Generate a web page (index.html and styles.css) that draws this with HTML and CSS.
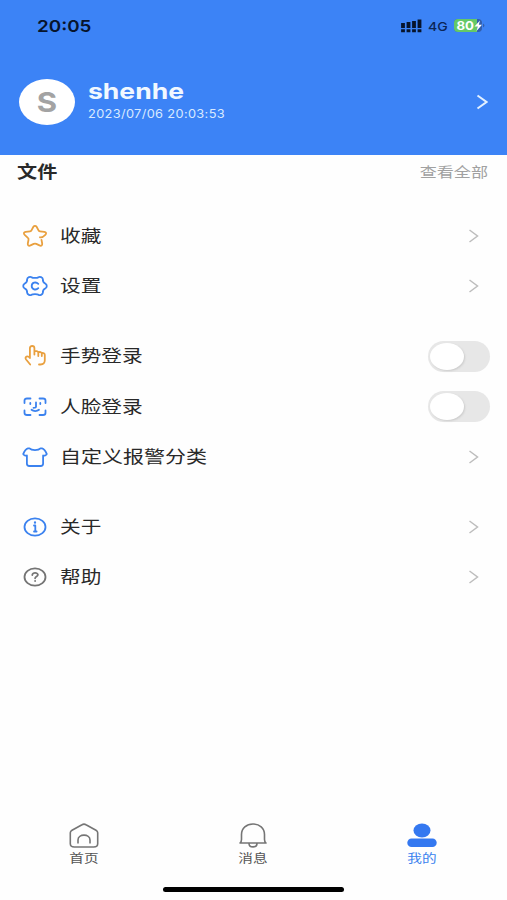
FILE: index.html
```html
<!DOCTYPE html>
<html lang="zh-CN">
<head>
<meta charset="utf-8">
<title>我的</title>
<link rel="stylesheet" href="styles.css">
</head>
<body>
<div class="screen">
  <header class="header">
    <div class="status">
      <span class="wide time">20:05</span>
      <div class="status-right">
        <svg class="signal" width="21" height="14" viewBox="0 0 21 14"><path d="M2 4v5M7.500 3v6M13 2v7M18.500.5v8.500M2 10.200v3M7.500 10.200v3M13 10.200v3M18.500 10.200v3" stroke="#07142c" stroke-width="3.800"/></svg>
        <span class="wide network">4G</span>
        <svg class="battery" width="32" height="14" viewBox="0 0 32 14"><rect width="28" height="13" rx="4" fill="#315fae"/><path d="M4 0h19v13H4a4 4 0 0 1-4-4V4a4 4 0 0 1 4-4Z" fill="#65c966"/><path d="M29 4.500q3 2 0 4Z" fill="#315fae"/><text x="2.500" y="10.800" textLength="17.500" lengthAdjust="spacingAndGlyphs" class="battery-text">80</text><path d="M26 1.500 20.500 7.500h3.200L22.500 12l5.500-6.300h-3.200Z" fill="#fff"/></svg>
      </div>
    </div>
    <div class="profile">
      <div class="avatar"><span>S</span></div>
      <div class="identity">
        <div class="wide name">shenhe</div>
        <div class="wide date">2023/07/06 20:03:53</div>
      </div>
      <svg class="profile-arrow" width="12" height="16" viewBox="0 0 12 16"><path d="m1.500 1.500 9 6.500-9 6.500" fill="none" stroke="#e2f0ff" stroke-width="2"/></svg>
    </div>
  </header>
  <main>
    <div class="section-title"><h1 class="wide">文件</h1><span class="wide all">查看全部</span></div>
    <section class="group">
      <div class="row">
        <svg class="icon orange" viewBox="0 0 26 24"><path d="M18 13.300c1.800.7 3.300-.4 5.300-2.400 1.500-1.500.8-2.700-1-3l-4.300-.6c-.8-.1-1.300-.5-1.600-1.200l-1.800-3.300c-.8-1.300-2.400-1.300-3.200 0L9.600 6.100c-.3.700-.8 1.100-1.600 1.200l-4.300.6c-1.800.3-2.500 1.500-1 3l3.200 3c.6.500.8 1.200.6 2l-.7 3.600c-.3 2 1 2.800 2.700 1.900l3.200-1.500c.9-.4 1.700-.4 2.600 0l3.200 1.500c1.700.9 3 .1 2.700-1.900l-.7-3.600"/></svg>
        <span class="wide label">收藏</span><svg class="arrow" viewBox="0 0 11 14"><path d="m1.500 1 8 6-8 6"/></svg>
      </div>
      <div class="row">
        <svg class="icon blue" viewBox="0 0 26 24"><path d="M9.500 3.200c1.200 1 5.800 1 7 0 1.200-.9 4.200.2 4.400 2.100-.3 2 .9 3.500 2.600 4.400 1.700 1 1.700 3.600 0 4.600-1.700.9-2.900 2.400-2.600 4.400-.2 1.900-3.200 3-4.400 2.100-1.200-1-5.800-1-7 0-1.200.9-4.200-.2-4.400-2.100.3-2-.9-3.500-2.600-4.400-1.700-1-1.700-3.600 0-4.600 1.700-.9 2.900-2.400 2.600-4.400.2-1.900 3.200-3 4.400-2.100Z"/><path d="M16.300 9.800c-2.500-2.400-6.600-1.200-6.600 2.200s4.100 4.600 6.600 2.200"/></svg>
        <span class="wide label">设置</span><svg class="arrow" viewBox="0 0 11 14"><path d="m1.500 1 8 6-8 6"/></svg>
      </div>
    </section>
    <section class="group">
      <div class="row">
        <svg class="icon orange" viewBox="0 0 26 24"><path d="M8.200 20.500 4.100 15.500c-1-1.300-.6-2.500.4-2.900 1.200-.4 2.500.3 3.400 1.400V4c0-2.700 4.500-2.700 4.500 0v6.500M12.400 7.500c1.200-.8 3.900-.5 3.900 1.300V12M16.300 8.300c1.500-.7 3.500-.2 3.500 1.400V12M19.800 9.100c1.500-.4 3 .3 3 2v5.200c0 2.700-1 4.200-4.300 4.200H17"/></svg>
        <span class="wide label">手势登录</span><span class="toggle"></span>
      </div>
      <div class="row">
        <svg class="icon blue" viewBox="0 0 26 24"><path d="M2.500 8V5.500Q2.500 3.500 5 3.500h3.500M17.500 3.500H21q2.500 0 2.500 2V8M23.500 15.500v2.500q0 2-2.500 2h-3.500M8.500 20H5q-2.500 0-2.500-2V15.500M8.300 8v1M18.300 8v1M14 7.500v4.300q0 1-2.500 1M9.500 14.800c2 1.700 5.500 1.700 7.500 0"/></svg>
        <span class="wide label">人脸登录</span><span class="toggle"></span>
      </div>
      <div class="row">
        <svg class="icon blue" viewBox="0 0 26 24"><path d="M7.500 3.300c2 2.300 9 2.300 11 0h1.500c1.800.5 3.900 3.500 4.700 5.500.4 1-2.200 2.300-3.600 1.700v8.300c0 1.500-.7 2.200-2.500 2.200H7.400c-1.800 0-2.500-.7-2.500-2.200v-8.300c-1.400.6-4-.7-3.600-1.700.8-2 2.900-5 4.700-5.500Z"/></svg>
        <span class="wide label custom">自定义报警分类</span><svg class="arrow" viewBox="0 0 11 14"><path d="m1.500 1 8 6-8 6"/></svg>
      </div>
    </section>
    <section class="group">
      <div class="row">
        <svg class="icon blue" viewBox="0 0 26 24"><ellipse cx="13" cy="12" rx="10.500" ry="8.700"/><path d="M12 10.500h1.300v6M12 16.500h2.600"/><path d="M13 7.300v.4" stroke-width="2.200"/></svg>
        <span class="wide label">关于</span><svg class="arrow" viewBox="0 0 11 14"><path d="m1.500 1 8 6-8 6"/></svg>
      </div>
      <div class="row">
        <svg class="icon gray" viewBox="0 0 26 24"><ellipse cx="13" cy="12" rx="10.500" ry="8.700"/><path d="M10.300 10c0-2.800 5.600-2.600 5.600-.2 0 1.700-2.800 1.600-2.800 3.500M13.100 15.800v.3"/></svg>
        <span class="wide label">帮助</span><svg class="arrow" viewBox="0 0 11 14"><path d="m1.500 1 8 6-8 6"/></svg>
      </div>
    </section>
  </main>
  <nav class="tabs">
    <div class="tab"><svg width="30" height="26" viewBox="0 0 30 26"><path d="M13 1.700q2-1.200 4 0l10 5.500q1.700 1 1.700 2.500v11q0 3.300-4 3.300H5.300q-4 0-4-3.300v-11q0-1.500 1.700-2.500ZM9 20.500V17c0-6.500 12-6.500 12 0v3.500"/></svg><span class="wide">首页</span></div>
    <div class="tab"><svg width="30" height="26" viewBox="0 0 30 26"><path d="M2 20q1.500-1.200 1.500-3.500v-5C3.500 5 8.500 1 15 1s11.500 4 11.500 10.500v5q0 2.300 1.500 3.500ZM11 20.500c0 4.500 8 4.500 8 0"/></svg><span class="wide">消息</span></div>
    <div class="tab active"><svg width="30" height="26" viewBox="0 0 30 26"><ellipse cx="15" cy="7.500" rx="8.500" ry="7"/><rect x=".3" y="15.500" width="29.400" height="8.500" rx="4.250"/></svg><span class="wide">我的</span></div>
  </nav>
  <div class="home-bar"></div>
</div>
</body>
</html>
```
FILE: styles.css
```css
* { box-sizing: border-box; }
body { margin: 0; background: #fefefe; font-family: Inter, "Noto Sans CJK SC", sans-serif; color: #292929; }
.screen { width: 507px; height: 900px; display: flex; flex-direction: column; overflow: hidden; }
.wide { display: inline-block; transform: scaleX(1.22); transform-origin: left center; white-space: nowrap; }
.header { height: 155px; background: #3c83f6; flex-shrink: 0; }
.status { height: 52px; padding: 0 21px 0 37px; display: flex; align-items: center; justify-content: space-between; }
.time { font-size: 16.5px; font-weight: 600; line-height: 20px; color: #07142c; transform: scaleX(1.14); }
.status-right { display: flex; align-items: center; }
.signal { margin-right: 6px; }
.network { width: 26px; font-size: 12px; font-weight: 500; color: #0b2656; transform: scaleX(1.17); }
.battery-text { font: 700 11.5px Inter, sans-serif; fill: #fff; }
.profile { height: 100px; padding: 0 19px; display: flex; align-items: center; }
.avatar { width: 56px; height: 46px; border-radius: 50%; background: #fff; display: flex; align-items: center; justify-content: center; color: #a3a3a3; font-size: 27px; font-weight: 700; }
.avatar span { transform: scaleX(1.15); }
.identity { margin-left: 13px; padding-top: 1px; flex: 1; display: flex; flex-direction: column; align-items: flex-start; }
.name { color: #f1f8ff; font-size: 22px; font-weight: 700; line-height: 23px; transform: scaleX(1.205); }
.date { color: #d8e9ff; font-size: 11.5px; line-height: 23px; letter-spacing: .3px; transform: scaleX(1.115); }
.section-title { height: 56px; padding: 5px 19px 0 17px; display: flex; justify-content: space-between; align-items: flex-start; }
h1 { margin: 0; font-size: 16.5px; line-height: 24px; font-weight: 700; }
.all { transform-origin: right center; font-size: 14px; line-height: 24px; color: #a1a1a1; }
.group { margin-bottom: 20px; }
.row { height: 50.200px; padding: 0 17px 0 22px; display: flex; align-items: center; }
.icon { width: 26px; height: 24px; fill: none; stroke-width: 1.8; stroke-linecap: round; stroke-linejoin: round; }
.orange { stroke: #e9a03f; }
.blue { stroke: #3b82ef; }
.gray { stroke: #747474; }
.label { margin-left: 12px; font-size: 17px; line-height: 24px; transform: scaleX(1.215); }
.custom { transform: scaleX(1.235); }
.arrow { width: 11px; height: 14px; margin-left: auto; margin-right: 11px; fill: none; stroke: #bdbdbd; stroke-width: 1.5; }
.toggle { width: 62px; height: 31px; margin-left: auto; padding: 2px; border-radius: 20px; background: #e7e7e7; }
.toggle::before { content: ""; display: block; width: 34px; height: 27px; border-radius: 50%; background: #fff; box-shadow: 1px 1px 2px #ccc; }
.tabs { height: 58px; margin-top: auto; display: flex; }
.tab { width: 33.333%; display: flex; flex-direction: column; align-items: center; color: #555; }
.tab svg { fill: none; stroke: #757575; stroke-width: 1.6; stroke-linejoin: round; }
.tab .wide { transform-origin: center; font-size: 12px; line-height: 20px; }
.tab.active { color: #3b82ef; }
.tab.active svg { fill: #3478f0; stroke: none; }
.home-bar { width: 181px; height: 5px; flex-shrink: 0; margin: 6px auto 8px; border-radius: 5px; background: #000; }
```
